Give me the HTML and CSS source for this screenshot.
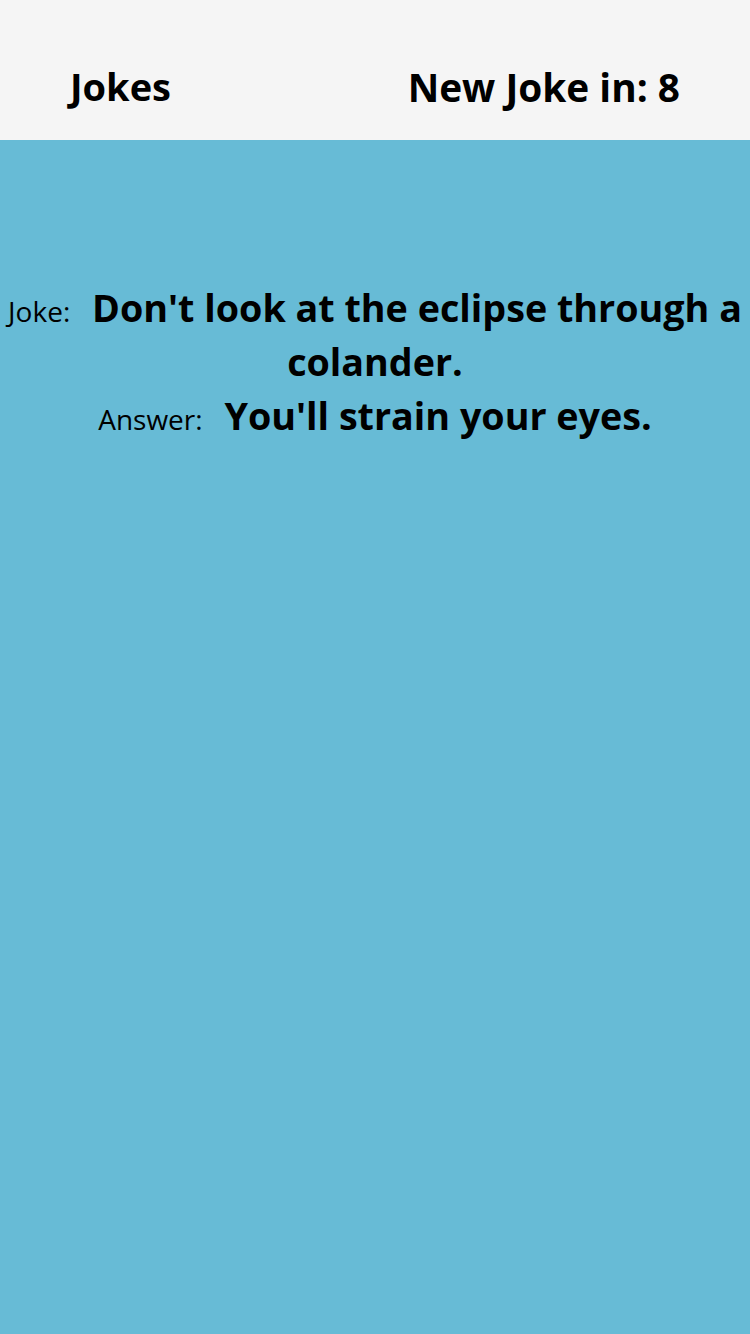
FILE: index.html
```html
<!DOCTYPE html>
<html lang="en">
<head>
<meta charset="utf-8">
<title>Jokes</title>
<link rel="stylesheet" href="styles.css">
</head>
<body>
<div class="app">
  <header class="header">
    <h1 class="title">Jokes</h1>
    <div class="timer">New Joke in: 8</div>
  </header>
  <main class="content">
    <p class="line"><span class="label">Joke:</span> <span class="text">Don't look at the eclipse through a colander.</span></p>
    <p class="line"><span class="label">Answer:</span> <span class="text">You'll strain your eyes.</span></p>
  </main>
</div>
</body>
</html>
```
FILE: styles.css
```css
html, body {
  margin: 0;
  padding: 0;
  height: 100%;
}
body {
  font-family: "Open Sans", "Noto Sans", sans-serif;
  color: #000;
  background: #67bbd6;
}
.app {
  display: flex;
  flex-direction: column;
  min-height: 100%;
}
.header {
  height: 140px;
  box-sizing: border-box;
  padding: 34px 70px 0;
  background: #f5f5f5;
  display: flex;
  justify-content: space-between;
  align-items: center;
}
.title, .timer {
  margin: 0;
  font-size: 38px;
  font-weight: 700;
  line-height: 1.3;
}
.timer {
  font-size: 38.8px;
}
.content {
  flex: 1;
  background: #67bbd6;
  padding-top: 141px;
  text-align: center;
}
.line {
  margin: 0;
  font-size: 37.7px;
  line-height: 54px;
}
.label {
  font-size: 28px;
  font-weight: 400;
  line-height: 1;
  margin-right: 12px;
}
.text {
  font-size: 37.7px;
  font-weight: 700;
}
```
